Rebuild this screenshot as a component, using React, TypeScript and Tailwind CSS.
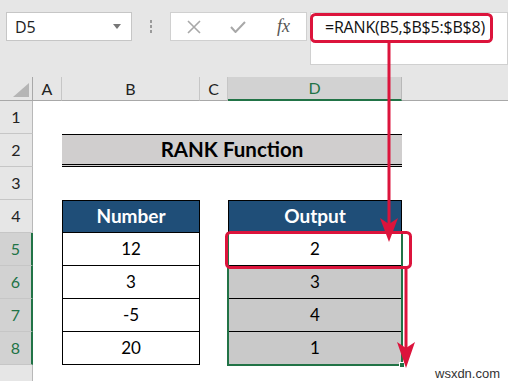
import React from "react";

const cols = ["A", "B", "C", "D"];
const numbers = ["12", "3", "-5", "20"];
const outputs = ["2", "3", "4", "1"];

function RowHead({ n, sel }: { n?: number; sel?: boolean }) {
  return (
    <div
      className={
        sel
          ? "flex items-center justify-center bg-[#d2d2d2] border-b border-[#c6c6c6] border-r-2 border-r-[#217346] text-[#217346] text-[16px]"
          : "flex items-center justify-center bg-[#e6e6e6] border-b border-[#c6c6c6] border-r border-r-[#b8b8b8] text-[#222] text-[16px]"
      }
    >
      {n}
    </div>
  );
}

export default function App() {
  return (
    <div className="relative w-[508px] h-[381px] overflow-hidden bg-white font-['Lato','Liberation_Sans',sans-serif]">
      {/* toolbar */}
      <div className="flex items-start h-[77px] bg-[#e6e6e6] pt-3 pl-1.5">
        <div className="flex items-center justify-between w-[126px] h-[29px] bg-white border border-[#c6c6c6] pl-2 pr-2.5">
          <span className="text-[16px] text-[#222] font-['Open_Sans','Liberation_Sans',sans-serif]">D5</span>
          <svg width="8" height="5" viewBox="0 0 8 5">
            <path d="M0 0 L8 0 L4 5 Z" fill="#777" />
          </svg>
        </div>
        <div className="flex flex-col items-center justify-center gap-[2px] w-[38px] h-[29px]">
          <span className="w-[2px] h-[3px] bg-[#9a9a9a]" />
          <span className="w-[2px] h-[3px] bg-[#9a9a9a]" />
          <span className="w-[2px] h-[3px] bg-[#9a9a9a]" />
        </div>
        <div className="flex items-center w-[137px] h-[29px] bg-white border border-[#d0d0d0]">
          <svg className="ml-[16px]" width="14" height="14" viewBox="0 0 14 14">
            <path d="M1 1 L13 13 M13 1 L1 13" stroke="#a8a8a8" strokeWidth="1.6" />
          </svg>
          <svg className="ml-[29px]" width="16" height="12" viewBox="0 0 16 12">
            <path d="M1 6 L5.5 11 L15 1" stroke="#a8a8a8" strokeWidth="2" fill="none" />
          </svg>
          <span className="ml-[31px] text-[18px] italic text-[#555] font-['Liberation_Serif',serif]">fx</span>
        </div>
        <div className="ml-[3px] flex-1 h-[53px] bg-white border border-[#d0d0d0] pl-[14px] pt-[2px]">
          <span className="text-[16px] text-[#111] font-['Open_Sans','Liberation_Sans',sans-serif] tracking-[-0.2px]">
            =RANK(B5,$B$5:$B$8)
          </span>
        </div>
      </div>

      {/* sheet */}
      <div className="grid grid-cols-[33px_29px_138px_28px_174px_1fr] grid-rows-[24px_repeat(8,33px)_1fr] h-[304px] text-[17px]">
        {/* column headers */}
        <div className="flex items-end justify-end bg-[#e6e6e6] border-r border-b border-[#a8a8a8] pr-[3px] pb-[3px]">
          <svg width="16" height="14" viewBox="0 0 16 14">
            <path d="M16 0 L16 14 L0 14 Z" fill="#b5b5b5" />
          </svg>
        </div>
        {cols.map((c) =>
          c === "D" ? (
            <div
              key={c}
              className="flex items-center justify-center bg-[#d2d2d2] border-r border-[#b8b8b8] border-b-2 border-b-[#217346] text-[#217346] text-[16px]"
            >
              {c}
            </div>
          ) : (
            <div
              key={c}
              className="flex items-center justify-center bg-[#e6e6e6] border-r border-[#c6c6c6] border-b border-b-[#a8a8a8] text-[#222] text-[16px]"
            >
              {c}
            </div>
          )
        )}
        <div className="bg-[#e6e6e6] border-b border-[#a8a8a8]" />

        {/* row 1 */}
        <RowHead n={1} />
        <div className="col-span-5" />

        {/* row 2 */}
        <RowHead n={2} />
        <div />
        <div className="col-span-3 flex items-center justify-center bg-[#d0cece] border-t border-black border-b-[3px] border-b-black border-double font-bold text-[20.5px] text-black">
          RANK Function
        </div>
        <div />

        {/* row 3 */}
        <RowHead n={3} />
        <div className="col-span-5" />

        {/* row 4 */}
        <RowHead n={4} />
        <div />
        <div className="flex items-center justify-center bg-[#1f4e78] border border-black font-bold text-white text-[19px]">
          Number
        </div>
        <div />
        <div className="flex items-center justify-center bg-[#1f4e78] border border-black font-bold text-white text-[19px]">
          Output
        </div>
        <div />

        {/* rows 5-8 */}
        <RowHead n={5} sel />
        <div />
        <div className="flex items-center justify-center border-x border-b border-black">{numbers[0]}</div>
        <div />
        <div className="row-span-4 relative flex flex-col outline-2 outline-[#217346] -outline-offset-1">
          {outputs.map((o, i) => (
            <div
              key={i}
              className={
                i === 0
                  ? "h-[33px] flex items-center justify-center bg-white border-x border-b border-black"
                  : "h-[33px] flex items-center justify-center bg-[#c9c9c9] border-x border-b border-black"
              }
            >
              {o}
            </div>
          ))}
          <span className="absolute -right-[3px] -bottom-[3px] w-[6px] h-[6px] bg-[#217346] border border-white" />
        </div>
        <div className="row-span-4" />

        <RowHead n={6} sel />
        <div />
        <div className="flex items-center justify-center border-x border-b border-black">{numbers[1]}</div>
        <div />

        <RowHead n={7} sel />
        <div />
        <div className="flex items-center justify-center border-x border-b border-black">{numbers[2]}</div>
        <div />

        <RowHead n={8} sel />
        <div />
        <div className="flex items-center justify-center border-x border-b border-black">{numbers[3]}</div>
        <div />

        {/* row 9 */}
        <div className="bg-[#e6e6e6] border-r border-[#b8b8b8]" />
        <div className="col-span-5" />
      </div>

      {/* annotations */}
      <svg className="absolute left-0 top-0 pointer-events-none" width="508" height="381" viewBox="0 0 508 381">
        <g stroke="#dc143c" strokeWidth="3" fill="none">
          <rect x="311.5" y="14.5" width="180" height="27" rx="4" />
          <line x1="389" y1="41" x2="389" y2="225" />
          <rect x="226.5" y="232.5" width="184" height="35" rx="4" />
          <line x1="406" y1="268" x2="406" y2="350" />
        </g>
        <path d="M380 218 L389 224 L398 218 L389 242 Z" fill="#dc143c" />
        <path d="M397 342 L406 348 L415 342 L406 368 Z" fill="#dc143c" />
      </svg>

      <span className="absolute left-[435px] top-[364px] text-[13px] text-[#333] font-['Liberation_Sans',sans-serif]">
        wsxdn.com
      </span>
    </div>
  );
}
